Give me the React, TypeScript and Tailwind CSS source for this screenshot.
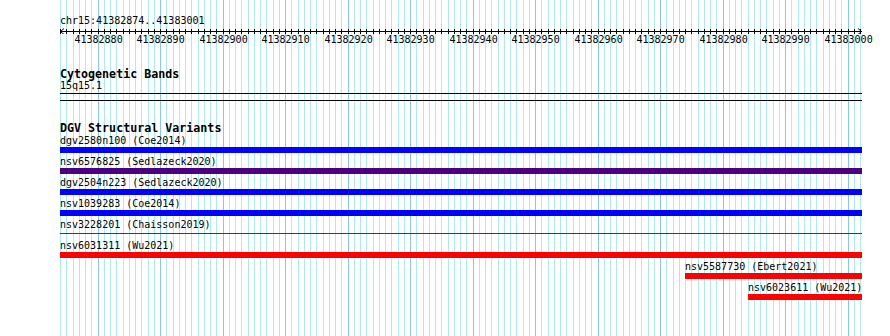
import React from "react";

const XS = Array.from({ length: 129 }, (_, k) => Math.floor(60.5 + 6.25 * k));
const LABELS = Array.from({ length: 13 }, (_, j) => ({ k: 6 + 10 * j, v: 41382880 + 10 * j }));

type Row = { label: string; color: string; kind: "bar" | "line"; offset?: "a" | "b" };
const ROWS: Row[] = [
  { label: "dgv2580n100 (Coe2014)", color: "bg-[#0000ff]", kind: "bar" },
  { label: "nsv6576825 (Sedlazeck2020)", color: "bg-[#4b0082]", kind: "bar" },
  { label: "dgv2504n223 (Sedlazeck2020)", color: "bg-[#0000ff]", kind: "bar" },
  { label: "nsv1039283 (Coe2014)", color: "bg-[#0000ff]", kind: "bar" },
  { label: "nsv3228201 (Chaisson2019)", color: "bg-[#cc0000]", kind: "line" },
  { label: "nsv6031311 (Wu2021)", color: "bg-[#ff0000]", kind: "bar" },
  { label: "nsv5587730 (Ebert2021)", color: "bg-[#ff0000]", kind: "bar", offset: "a" },
  { label: "nsv6023611 (Wu2021)", color: "bg-[#ff0000]", kind: "bar", offset: "b" },
];

function Grid() {
  return (
    <svg className="absolute inset-0" width={890} height={336} shapeRendering="crispEdges">
      {XS.map((x, k) => (
        <line
          key={k}
          x1={x + 0.5}
          x2={x + 0.5}
          y1={0}
          y2={336}
          stroke={k % 10 === 6 ? "#88c6ee" : "#aeeaf0"}
          strokeWidth={1}
        />
      ))}
    </svg>
  );
}

function Ruler() {
  return (
    <svg width={803} height={8} className="block" shapeRendering="crispEdges">
      <line x1={0} x2={802} y1={5.5} y2={5.5} stroke="#000" strokeWidth={1} />
      {XS.map((x, k) => (
        <line key={k} x1={x - 60 + 0.5} x2={x - 60 + 0.5} y1={3} y2={8} stroke="#000" strokeWidth={1} />
      ))}
      <polyline points="4,2.5 0.5,5.5 4,8.5" fill="none" stroke="#000" strokeWidth={1} shapeRendering="auto" />
      <polyline points="798,2.5 801.5,5.5 798,8.5" fill="none" stroke="#000" strokeWidth={1} shapeRendering="auto" />
    </svg>
  );
}

export default function App() {
  return (
    <div className="relative w-[890px] h-[336px] bg-white overflow-hidden text-black font-['DejaVu_Sans_Mono',monospace]">
      <Grid />
      <div className="relative pl-[60px] w-[862px]">
        <div className="pt-[16px] text-[10px] leading-[10px] h-[26px]">chr15:41382874..41383001</div>
        <Ruler />
        <div className="relative mt-[1px] h-[10px] text-[10px] leading-[10px]">
          {LABELS.map((l) => (
            <div
              key={l.k}
              className="absolute top-0 w-[48px] text-center"
              style={{ left: XS[l.k] - 60 + 0.5 - 24 }}
            >
              {l.v}
            </div>
          ))}
        </div>
        <div className="mt-[23px] h-[12px] text-[11.67px] leading-[12px] font-bold">Cytogenetic Bands</div>
        <div className="mt-[1px] h-[10px] text-[10px] leading-[10px]">15q15.1</div>
        <div className="mt-[2px] h-px w-[802px] bg-black" />
        <div className="mt-[6px] h-px w-[802px] bg-black" />
        <div className="mt-[21px] h-[12px] text-[11.67px] leading-[12px] font-bold">DGV Structural Variants</div>
        <div className="mt-[2px] flex w-[802px] flex-col">
          {ROWS.map((r) => (
            <div
              key={r.label}
              className={`h-[21px] ${r.offset === "a" ? "ml-[625px]" : r.offset === "b" ? "ml-[688px]" : ""}`}
            >
              <div className="h-[10px] text-[10px] leading-[10px] whitespace-nowrap">{r.label}</div>
              {r.kind === "bar" ? (
                <div className={`mt-[1px] h-[6px] ${r.color}`} />
              ) : (
                <div className={`mt-[3px] h-px ${r.color}`} />
              )}
            </div>
          ))}
        </div>
      </div>
    </div>
  );
}
